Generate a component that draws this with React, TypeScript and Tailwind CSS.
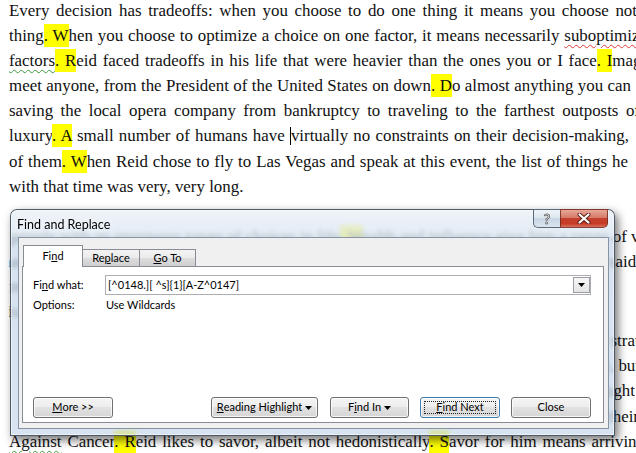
import React from "react";

function Hl({ children }: { children: React.ReactNode }) {
  return <span className="bg-[#ffff00] py-[2px]">{children}</span>;
}

function Caret() {
  return (
    <svg width="7" height="4" viewBox="0 0 7 4" className="ml-[3px]">
      <path d="M0 0h7L3.5 4z" fill="#000" />
    </svg>
  );
}

function Btn({ className, children }: { className: string; children: React.ReactNode }) {
  return (
    <div
      className={`relative flex h-[21px] items-center justify-center rounded-[3px] border bg-[linear-gradient(#f5f5f5,#ededed_50%,#e1e1e1_50%,#d6d6d6)] text-[11px] text-black shadow-[inset_0_0_0_1px_rgba(255,255,255,0.75)] ${className}`}
    >
      {children}
    </div>
  );
}

const Dialog = () => {
  return (
    <div className="absolute left-[10px] top-[209px] flex h-[227px] w-[605px] flex-col rounded-t-[7px] border border-[#2d3846]/80 bg-[#c6d7ea]/70 font-['Lato',sans-serif] shadow-[inset_0_0_0_1px_rgba(255,255,255,0.55),3px_4px_10px_rgba(0,0,0,0.55)] backdrop-blur-[2px]">
      {/* title bar */}
      <div className="relative flex h-[27px] shrink-0 items-center rounded-t-[6px] bg-[linear-gradient(rgba(255,255,255,0.6),rgba(255,255,255,0.25))] pl-[6px] pt-[3px]">
        <span className="text-[12.5px] text-black [text-shadow:0_0_6px_#fff]">Find and Replace</span>
        <div className="absolute right-[6px] top-[-1px] flex h-[19px]">
          <div className="flex w-[27px] items-center justify-center rounded-bl-[5px] border border-r-0 border-[#5b6a7b] bg-[linear-gradient(#eef3f8,#dde6f0_45%,#c9d6e4_50%,#d9e4ef)]">
            <span className="text-[14px] font-bold leading-none text-white [-webkit-text-stroke:0.8px_#5e5e5e]">?</span>
          </div>
          <div className="flex w-[48px] items-center justify-center rounded-br-[5px] border border-[#6b2a1e]/80 bg-[linear-gradient(#e8a898,#d57a6a_45%,#c4402c_50%,#c63c27_80%,#d8725d)]">
            <svg width="14" height="11" viewBox="0 0 14 11">
              <path d="M2.5 1.5l9 8M11.5 1.5l-9 8" stroke="#5a1a10" strokeWidth="4" strokeLinecap="round" />
              <path d="M2.5 1.5l9 8M11.5 1.5l-9 8" stroke="#fff" strokeWidth="2.2" strokeLinecap="round" />
            </svg>
          </div>
        </div>
      </div>

      {/* client area */}
      <div className="mb-[6px] ml-[7px] mr-[5px] flex flex-1 flex-col border border-[#8794a3] bg-[#f0f0f0]">
        <div className="mb-[5px] ml-[3px] mr-[4px] mt-[7px] flex flex-1 flex-col">
          {/* tabs */}
          <div className="flex h-[21px] items-end pl-[1px] text-[11px] text-black">
            <div className="relative z-10 -mb-px flex h-[22px] w-[60px] items-center justify-center border border-b-0 border-[#898c95] bg-white">
              Fi<span className="underline">n</span>d
            </div>
            <div className="flex h-[17px] w-[57px] items-center justify-center border border-b-0 border-l-0 border-[#898c95] bg-[linear-gradient(#f3f3f3,#ebebeb_50%,#dddddd_50%,#cfcfcf)]">
              Re<span className="underline">p</span>lace
            </div>
            <div className="flex h-[17px] w-[56px] items-center justify-center border border-b-0 border-l-0 border-[#898c95] bg-[linear-gradient(#f3f3f3,#ebebeb_50%,#dddddd_50%,#cfcfcf)]">
              <span className="underline">G</span>o To
            </div>
          </div>

          {/* tab page */}
          <div className="flex flex-1 flex-col border border-[#898c95] bg-white pb-[4px] pl-[10px] pr-[12px] pt-[8px] text-[11px] text-black">
            <div className="flex h-[20px] items-center">
              <div className="w-[72px]">
                Fi<span className="underline">n</span>d what:
              </div>
              <div className="flex h-[20px] flex-1 items-center border border-[#abadb3] bg-white pl-[2px]">
                <span className="flex-1">[^0148.][ ^s]{"{1}"}[A-Z^0147]</span>
                <div className="flex h-[16px] w-[17px] items-center justify-center border border-[#9a9ea6] bg-[linear-gradient(#f7f7f7,#e4e4e4)]">
                  <svg width="7" height="4" viewBox="0 0 7 4">
                    <path d="M0 0h7L3.5 4z" fill="#000" />
                  </svg>
                </div>
              </div>
            </div>
            <div className="mt-[3px] flex h-[14px] items-center">
              <div className="w-[73px]">Options:</div>
              <div>Use Wildcards</div>
            </div>

            <div className="mt-auto flex items-center">
              <Btn className="w-[80px] border-[#707070]">
                <span className="underline">M</span>ore &gt;&gt;
              </Btn>
              <div className="ml-auto flex items-center">
                <Btn className="w-[107px] border-[#707070]">
                  <span className="underline">R</span>eading Highlight
                  <Caret />
                </Btn>
                <Btn className="ml-[12px] w-[79px] border-[#707070]">
                  F<span className="underline">i</span>nd In
                  <Caret />
                </Btn>
                <Btn className="ml-[11px] w-[80px] border-[#3c7fb1] shadow-[inset_0_0_0_1px_#bfe3f7]">
                  <span className="pointer-events-none absolute inset-[3px] border border-dotted border-[#222]" />
                  <span className="underline">F</span>ind Next
                </Btn>
                <Btn className="ml-[11px] w-[80px] border-[#707070]">Close</Btn>
              </div>
            </div>
          </div>
        </div>
      </div>
    </div>
  );
};

export default function App() {
  return (
    <div className="relative h-[453px] w-[636px] overflow-hidden bg-white">
      <div className="mt-[-2px] pl-[9px] font-['Liberation_Serif','Times_New_Roman',serif] text-[16.9px] leading-[25.1px] text-[#111]">
        <div className="w-[628px] text-justify [text-align-last:justify]">
          Every decision has tradeoffs: when you choose to do one thing it means you choose not
        </div>
        <div className="w-[652px] text-justify [text-align-last:justify]">
          thing<Hl>. W</Hl>hen you choose to optimize a choice on one factor, it means necessarily{" "}
          <span className="underline decoration-[#e03a3a] decoration-wavy decoration-1 underline-offset-[3px]">suboptimizing</span>
        </div>
        <div className="w-[653px] text-justify [text-align-last:justify]">
          <span className="underline decoration-[#3f9a3f] decoration-wavy decoration-1 underline-offset-[3px]">factors</span>
          <Hl>. R</Hl>eid faced tradeoffs in his life that were heavier than the ones you or I face<Hl>. I</Hl>magine
        </div>
        <div className="w-[622px] text-justify [text-align-last:justify]">
          meet anyone, from the President of the United States on down<Hl>. D</Hl>o almost anything you can
        </div>
        <div className="w-[631px] text-justify [text-align-last:justify]">
          saving the local opera company from bankruptcy to traveling to the farthest outposts of
        </div>
        <div className="w-[620px] text-justify [text-align-last:justify]">
          luxury<Hl>. A</Hl> small number of humans have{" "}
          <span className="inline-block h-[18px] w-0 border-l border-black align-[-4px]" />
          virtually no constraints on their decision-making,
        </div>
        <div className="w-[619px] text-justify [text-align-last:justify]">
          of them<Hl>. W</Hl>hen Reid chose to fly to Las Vegas and speak at this event, the list of things he
        </div>
        <div>with that time was very, very long.</div>
        <div>&nbsp;</div>
        {/* lines mostly hidden behind the dialog */}
        <div className="flex w-[652px] justify-end overflow-hidden whitespace-nowrap">
          <span>
            Reid Hoffman is one of the few people with an enormous range of choices in life<Hl>. W</Hl>ealth and influence give him a range of very
          </span>
        </div>
        <div className="flex w-[652px] justify-end overflow-hidden whitespace-nowrap">
          <span>many options open at every moment. When asked how he chooses between them, he once said the</span>
        </div>
        <div className="flex w-[600px] justify-end overflow-hidden whitespace-nowrap">
          <span>most important thing is to know what truly matters to you, and then to commit to it fully.</span>
        </div>
        <div className="mb-[4px] flex w-[596px] justify-end overflow-hidden whitespace-nowrap">
          <span>That is the heart of what this talk is about: how to decide well when there are few constraints.</span>
        </div>
        <div className="flex w-[655px] justify-end overflow-hidden whitespace-nowrap">
          <span>Reid has a clear way to make his decisions, one that reflects a very deliberate strategy</span>
        </div>
        <div className="flex w-[631px] justify-end overflow-hidden whitespace-nowrap">
          <span>of focusing on the highest-leverage opportunities for impact in the world at large, but</span>
        </div>
        <div className="flex w-[626px] justify-end overflow-hidden whitespace-nowrap">
          <span>also on the people and the projects that bring him joy, which he has long thought</span>
        </div>
        <div className="flex w-[630px] justify-end overflow-hidden whitespace-nowrap">
          <span>about and discussed with friends, founders and partners who share their</span>
        </div>
        <div className="w-[636px] text-justify [text-align-last:justify]">
          <span className="underline decoration-[#3f9a3f] decoration-wavy decoration-1 underline-offset-[3px]">Against</span> Cancer
          <Hl>. R</Hl>eid likes to savor, albeit not hedonistically<Hl>. S</Hl>avor for him means arriving
        </div>
      </div>
      <Dialog />
    </div>
  );
}
